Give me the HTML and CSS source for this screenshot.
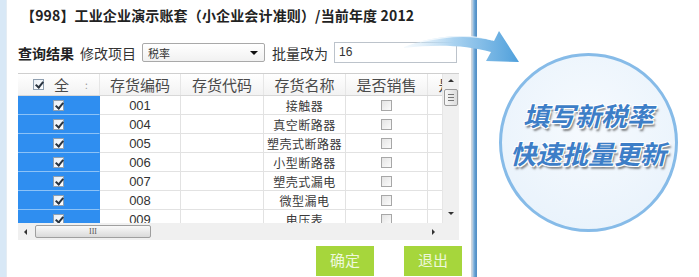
FILE: index.html
```html
<!DOCTYPE html>
<html>
<head>
	<title>批量修改税率</title>
	<meta charset="utf-8"/>
	<link rel="stylesheet" href="styles.css">
</head>
<body>

<div class="screen">
	<div class="win">
		<div class="win-body">
			<h1 class="title">【998】工业企业演示账套（小企业会计准则）/当前年度 2012</h1>
			<div class="toolbar">
				<b>查询结果</b>
				<span class="label">修改项目</span>
				<div class="select"><span>税率</span><i class="caret"></i></div>
				<span class="label">批量改为</span>
				<div class="input">16</div>
			</div>

			<div class="grid">
				<div class="grid-main">
					<div class="grid-view">
						<div class="grid-head">
							<div class="hcell first"><span class="cb on"></span><span>全</span><span class="sep">:</span></div>
							<div class="hcell">存货编码</div>
							<div class="hcell">存货代码</div>
							<div class="hcell">存货名称</div>
							<div class="hcell">是否销售</div>
							<div class="hcell">是否销售</div>
						</div>
						<div class="grid-row">
							<div class="cell sel"><span class="cb on"></span></div>
							<div class="cell code">001</div><div class="cell"></div>
							<div class="cell name">接触器</div>
							<div class="cell"><span class="cb"></span></div><div class="cell"></div>
						</div>
						<div class="grid-row">
							<div class="cell sel"><span class="cb on"></span></div>
							<div class="cell code">004</div><div class="cell"></div>
							<div class="cell name">真空断路器</div>
							<div class="cell"><span class="cb"></span></div><div class="cell"></div>
						</div>
						<div class="grid-row">
							<div class="cell sel"><span class="cb on"></span></div>
							<div class="cell code">005</div><div class="cell"></div>
							<div class="cell name">塑壳式断路器</div>
							<div class="cell"><span class="cb"></span></div><div class="cell"></div>
						</div>
						<div class="grid-row">
							<div class="cell sel"><span class="cb on"></span></div>
							<div class="cell code">006</div><div class="cell"></div>
							<div class="cell name">小型断路器</div>
							<div class="cell"><span class="cb"></span></div><div class="cell"></div>
						</div>
						<div class="grid-row">
							<div class="cell sel"><span class="cb on"></span></div>
							<div class="cell code">007</div><div class="cell"></div>
							<div class="cell name">塑壳式漏电</div>
							<div class="cell"><span class="cb"></span></div><div class="cell"></div>
						</div>
						<div class="grid-row">
							<div class="cell sel"><span class="cb on"></span></div>
							<div class="cell code">008</div><div class="cell"></div>
							<div class="cell name">微型漏电</div>
							<div class="cell"><span class="cb"></span></div><div class="cell"></div>
						</div>
						<div class="grid-row">
							<div class="cell sel"><span class="cb on"></span></div>
							<div class="cell code">009</div><div class="cell"></div>
							<div class="cell name">电压表</div>
							<div class="cell"><span class="cb"></span></div><div class="cell"></div>
						</div>
					</div>
					<div class="vscroll">
						<i class="tri up"></i>
						<div class="vthumb"><em></em><em></em><em></em></div>
						<div class="vtrack"></div>
						<i class="tri down"></i>
					</div>
				</div>
				<div class="hscroll-row">
					<div class="hscroll">
						<i class="tri left"></i>
						<div class="hthumb">III</div>
						<div class="htrack"></div>
						<i class="tri right"></i>
					</div>
					<div class="corner"></div>
				</div>
			</div>

			<div class="actions">
				<button>确定</button>
				<button>退出</button>
			</div>
		</div>
		<div class="frame"></div>
	</div>

	<div class="promo">
		<div class="badge">
			<p>填写新税率</p>
			<p>快速批量更新</p>
		</div>
	</div>

	<svg class="arrow" width="699" height="277" viewBox="0 0 699 277">
		<defs>
			<linearGradient id="swoosh" x1="400" y1="0" x2="520" y2="0" gradientUnits="userSpaceOnUse">
				<stop offset="0" stop-color="#dcedf9" stop-opacity="0.2"/>
				<stop offset="0.45" stop-color="#a9d2f0"/>
				<stop offset="1" stop-color="#4e9fdb"/>
			</linearGradient>
		</defs>
		<path d="M404 47 C428 38 462 31 494 41 L499 31 L519 62 L486 61 L491 52 C466 45 436 44 404 48 Z" fill="url(#swoosh)"/>
		<path d="M420 42 C445 36 470 34 492 40" fill="none" stroke="#ffffff" stroke-opacity="0.7" stroke-width="1.2"/>
	</svg>
</div>

</body>
</html>
```

FILE: styles.css
```css
* {
	margin: 0px;
	padding: 0px;
	box-sizing: border-box;
}

body {
	width: 699px;
	height: 277px;
	overflow: hidden;
	background-color: #ffffff;
	font-family: "Noto Sans CJK SC", "Liberation Sans", sans-serif;
	color: #222;
}

.screen {
	position: relative;
	display: flex;
	width: 699px;
	height: 277px;
	overflow: hidden;
}

/* 左侧窗口 */
.win {
	display: flex;
	width: 477px;
	height: 277px;
	border-left: 6px solid #d8e8f6;
	background-color: #ffffff;
}
	.win-body {
		flex: 1;
		padding: 5px 12px 0 11px;
		border-left: 1px solid #e4ecf3;
		height: 100%;
	}
	.frame {
		width: 7px;
		background: linear-gradient(90deg, #d0d6dc 0px, #d0d6dc 1px, #9fc3e2 2px, #5f9bcf 4px, #4a86bd 7px);
	}
	.title {
		font-size: 14px;
		line-height: 20px;
		font-weight: bold;
		padding-left: 3px;
		white-space: nowrap;
		letter-spacing: 0.15px;
	}

	.toolbar {
		display: flex;
		align-items: center;
		height: 21px;
		margin-top: 17px;
		font-size: 14px;
		white-space: nowrap;
	}
		.toolbar b {
			font-weight: bold;
			margin-right: 6px;
		}
		.toolbar .label {
			color: #333;
			margin-right: 6px;
		}
		.select {
			display: flex;
			align-items: center;
			justify-content: space-between;
			width: 123px;
			height: 19px;
			margin-right: 7px;
			padding: 0 6px 0 5px;
			border: 1px solid #a9a9a9;
			border-radius: 2px;
			background: linear-gradient(#ffffff, #f1f1f1);
			font-size: 11px;
			color: #333;
		}
		.caret {
			width: 0;
			height: 0;
			border-left: 4px solid transparent;
			border-right: 4px solid transparent;
			border-top: 4px solid #111;
		}
		.input {
			width: 123px;
			height: 21px;
			padding-left: 4px;
			border: 1px solid #bcc3cb;
			font-family: "Liberation Sans", sans-serif;
			font-size: 12px;
			line-height: 19px;
			color: #333;
		}

/* 表格 */
.grid {
	margin-top: 10px;
	width: 441px;
	background-color: #f0f0f0;
}
	.grid-main {
		display: flex;
		height: 150px;
		border-top: 1px solid #cfcfcf;
	}
	.grid-view {
		width: 424px;
		overflow: hidden;
		background-color: #ffffff;
	}
	.grid-head,
	.grid-row {
		display: grid;
		grid-template-columns: 82px 81px 83px 82px 82px 82px;
		width: 492px;
	}
	.grid-head {
		height: 22px;
		background: linear-gradient(#ffffff, #f2f2f2);
		border-bottom: 1px solid #d8d8d8;
	}
		.hcell {
			display: flex;
			align-items: center;
			justify-content: center;
			font-size: 15px;
			color: #4a4a4a;
			border-right: 1px solid #e6e6e6;
			white-space: nowrap;
			overflow: hidden;
		}
		.hcell.first {
			justify-content: flex-start;
			padding-left: 15px;
			gap: 10px;
		}
		.hcell .sep {
			font-size: 10px;
			color: #999;
			margin-left: 6px;
		}
	.grid-row {
		height: 19px;
	}
		.cell {
			display: flex;
			align-items: center;
			justify-content: center;
			border-right: 1px solid #e2e2e2;
			border-bottom: 1px solid #e2e2e2;
			white-space: nowrap;
			overflow: hidden;
		}
		.cell.sel {
			background-color: #2f8ef0;
			border-right-color: #2f8ef0;
			border-bottom-color: #8cc2f7;
		}
		.cell.code {
			font-family: "Liberation Sans", sans-serif;
			font-size: 13px;
			color: #333;
		}
		.cell.name {
			font-size: 12px;
			color: #3a3a3a;
			letter-spacing: 0.5px;
		}

	/* 复选框 */
	.cb {
		position: relative;
		display: inline-block;
		width: 11px;
		height: 11px;
		border: 1px solid #a7a7a7;
		background: linear-gradient(135deg, #e4e4e4, #fbfbfb);
	}
	.cb.on {
		border-color: #8f9fb0;
		background: linear-gradient(135deg, #e8eef5, #ffffff);
	}
		.cb.on::after {
			content: "";
			position: absolute;
			left: 3px;
			top: 0px;
			width: 3px;
			height: 6px;
			border-right: 2px solid #2a3440;
			border-bottom: 2px solid #2a3440;
			transform: rotate(40deg);
		}

	/* 滚动条 */
	.vscroll {
		display: flex;
		flex-direction: column;
		align-items: center;
		width: 17px;
		padding: 5px 0 8px;
		background-color: #f0f0f0;
		border-left: 1px solid #e6e6e6;
	}
		.vthumb {
			display: flex;
			flex-direction: column;
			justify-content: center;
			gap: 2px;
			width: 14px;
			height: 17px;
			margin-top: 7px;
			padding: 0 3px;
			border: 1px solid #9c9c9c;
			border-radius: 2px;
			background: linear-gradient(90deg, #f8f8f8, #dcdcdc);
		}
			.vthumb em {
				display: block;
				height: 1px;
				background-color: #777;
			}
		.vtrack {
			flex: 1;
		}
	.hscroll-row {
		display: flex;
		height: 17px;
	}
		.hscroll {
			display: flex;
			align-items: center;
			width: 424px;
			padding: 0 7px 0 6px;
			background-color: #f0f0f0;
		}
		.hthumb {
			width: 116px;
			height: 13px;
			margin-left: 8px;
			border: 1px solid #9f9f9f;
			border-radius: 2px;
			background: linear-gradient(#f9f9f9, #dadada);
			font-family: "Liberation Serif", serif;
			font-size: 8px;
			line-height: 11px;
			text-align: center;
			color: #555;
		}
		.htrack {
			flex: 1;
		}
		.corner {
			flex: 1;
			background-color: #f0f0f0;
		}
	.tri {
		width: 0;
		height: 0;
	}
		.tri.up {
			border-left: 3px solid transparent;
			border-right: 3px solid transparent;
			border-bottom: 3px solid #333;
		}
		.tri.down {
			border-left: 3px solid transparent;
			border-right: 3px solid transparent;
			border-top: 3px solid #333;
		}
		.tri.left {
			border-top: 3px solid transparent;
			border-bottom: 3px solid transparent;
			border-right: 3px solid #333;
		}
		.tri.right {
			border-top: 3px solid transparent;
			border-bottom: 3px solid transparent;
			border-left: 3px solid #333;
		}

/* 按钮 */
.actions {
	display: flex;
	justify-content: flex-end;
	gap: 30px;
	margin-top: 6px;
	margin-right: -3px;
}
	.actions button {
		width: 58px;
		height: 30px;
		padding-bottom: 4px;
		border: none;
		background-color: #a6d63c;
		color: #eef8dc;
		font-family: "Noto Sans CJK SC", sans-serif;
		font-size: 15px;
	}

/* 右侧说明 */
.promo {
	flex: 1;
	display: flex;
	justify-content: center;
	align-items: center;
	padding-top: 8px;
}
	.badge {
		display: flex;
		flex-direction: column;
		align-items: center;
		justify-content: center;
		gap: 10px;
		width: 179px;
		height: 179px;
		padding-bottom: 18px;
		border: 3px solid #86bbe8;
		border-radius: 50%;
		background: radial-gradient(circle at 50% 40%, #f6fafe, #e6f1fb);
	}
		.badge p {
			font-size: 26px;
			line-height: 28px;
			font-weight: bold;
			font-style: italic;
			color: #3d7ec7;
			white-space: nowrap;
			text-shadow: -1px -1px 0 #ffffff, 1px -1px 0 #ffffff, -1px 1px 0 #ffffff, 1px 1px 0 #ffffff, 2px 3px 2px rgba(40, 40, 40, 0.55);
		}

.arrow {
	position: absolute;
	left: 0px;
	top: 0px;
	pointer-events: none;
}
```
